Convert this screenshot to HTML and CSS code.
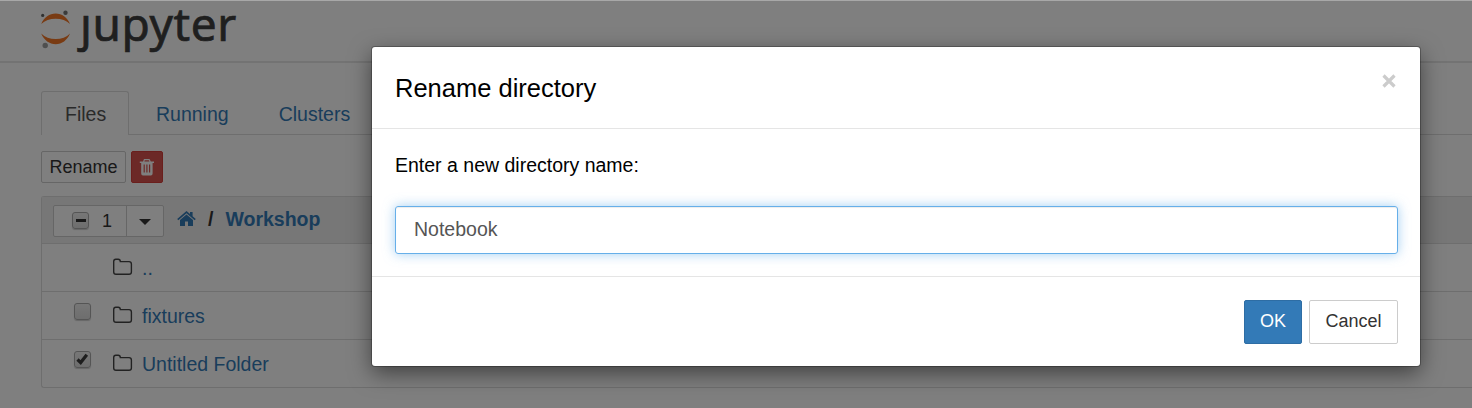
FILE: index.html
```html
<!DOCTYPE html>
<html lang="en">
<head>
<meta charset="utf-8">
<title>Workshop</title>
<link rel="stylesheet" href="styles.css">
</head>
<body>
<svg class="defs" width="0" height="0" aria-hidden="true">
  <symbol id="folder" viewBox="0 0 21 18"><path d="M1.700 3.400Q1.700 1.200 3.800 1.200H6.200Q8.300 1.200 8.300 3.600H17Q19.400 3.600 19.400 6V14Q19.400 16.200 17 16.200H4Q1.700 16.200 1.700 14Z" fill="none" stroke="#444" stroke-width="1.400"/></symbol>
</svg>
<header class="site-header">
  <svg class="logo-mark" width="30" height="40" viewBox="0 0 30 40">
    <path d="M.2 14C3 7.200 8.500 3.500 14.700 3.500S26.200 7.200 29 14C25.500 10.400 20.500 8.700 14.700 8.700S4 10.400.2 14Z" fill="#f37726"/>
    <path d="M.2 23.500C3 30.300 8.500 34.200 14.700 34.200S26.200 30.300 29 23.500C25.500 27.300 20.500 29 14.700 29S4 27.300.2 23.500Z" fill="#f37726"/>
    <circle cx="24.500" cy="2.700" r="2.200" fill="#767677"/><circle cx="1.700" cy="5.400" r="1.600" fill="#616262"/><circle cx="4.200" cy="35.500" r="2.700" fill="#9e9e9e"/>
  </svg>
  <span class="wordmark">ȷupyter</span>
</header>
<main class="page">
  <nav class="tabs"><a class="tab active">Files</a><a class="tab running">Running</a><a class="tab">Clusters</a></nav>
  <div class="actions">
    <span class="btn rename">Rename</span>
    <span class="btn danger"><svg width="16" height="17" viewBox="0 0 16 17"><path fill="#fff" fill-rule="evenodd" d="M5 0h5.500l1.300 2.600H15V4H13.600V14.500Q13.600 16.500 11.800 16.500H4Q2.200 16.500 2.200 14.500V4H.8V2.600H4ZM5.800 1.300 5.400 2.600h5L9.900 1.300ZM4.600 5.500v8h1.200v-8ZM7.300 5.500v8h1.200v-8ZM10 5.500v8h1.200v-8Z"/></svg></span>
  </div>
  <section class="list">
    <div class="list-head">
      <div class="select-group">
        <span class="select-all"><i class="check mixed"></i><span>1</span></span><span class="caret-btn"><i class="caret"></i></span>
      </div>
      <div class="crumbs">
        <svg width="19" height="16" viewBox="0 0 19 16"><path fill="#337ab7" d="M9.500 3.500 16 9V15H11V10.500H8V15H3V9ZM9.500 0 13 3V1h2.600v4.200L18.800 8 17.700 9.200 9.500 2.200 1.300 9.200.2 8Z"/></svg>
        <span class="slash">/</span><b class="link">Workshop</b>
      </div>
    </div>
    <div class="row"><span class="cell"></span><svg class="folder" width="21" height="18"><use href="#folder"/></svg><a class="link">..</a></div>
    <div class="row"><span class="cell"><i class="check"></i></span><svg class="folder" width="21" height="18"><use href="#folder"/></svg><a class="link">fixtures</a></div>
    <div class="row"><span class="cell"><i class="check"><svg width="13" height="12" viewBox="0 0 13 12"><path d="M1.500 6.500 4.700 9.600 10.800 1.800" fill="none" stroke="#3c3c3c" stroke-width="3.200"/></svg></i></span><svg class="folder" width="21" height="18"><use href="#folder"/></svg><a class="link">Untitled Folder</a></div>
  </section>
</main>
<div class="backdrop">
  <div class="modal">
    <div class="modal-head"><h4>Rename directory</h4><svg class="close" width="14" height="14" viewBox="0 0 14 14"><path d="M1.500 1.500 12.500 12.500M12.500 1.500 1.500 12.500" stroke="#ccc" stroke-width="3.200"/></svg></div>
    <div class="modal-body"><p>Enter a new directory name:</p><div class="input">Notebook</div></div>
    <div class="modal-foot"><span class="mbtn primary">OK</span><span class="mbtn">Cancel</span></div>
  </div>
</div>
</body>
</html>
```
FILE: styles.css
```css
* { box-sizing: border-box; }
body { margin: 0; height: 408px; overflow: hidden; background: #fff; color: #000; font: 19.5px/28px "Liberation Sans", Arial, sans-serif; }
.defs { position: absolute; }
.site-header { height: 63px; border-bottom: 2px solid #e7e7e7; padding: 10px 0 0 41px; display: flex; align-items: flex-start; }
.logo-mark { flex: none; }
.wordmark { font: 46px/50px "Noto Sans", "Open Sans", sans-serif; color: #3e3e3e; margin: -12px 0 0 9px; letter-spacing: .6px; -webkit-text-stroke: .7px #3e3e3e; }
.page { padding: 28px 0 0 41px; }
.tabs { height: 44px; display: flex; border-bottom: 1px solid #ddd; }
.tab { height: 43px; padding: 9px 23px 0 24px; color: #337ab7; }
.tab.active { width: 88px; height: 44px; padding: 8px 0 0 23px; color: #555; background: #fff; border: 1px solid #ddd; border-bottom: 0; border-radius: 3px 3px 0 0; }
.tab.running { padding: 9px 26px 0 27px; }
.actions { display: flex; gap: 5px; padding-top: 16px; height: 61px; }
.btn { height: 32px; border: 1px solid #ccc; border-radius: 2px; display: flex; align-items: center; justify-content: center; font-size: 18px; color: #333; }
.rename { width: 85px; }
.danger { width: 32px; background: #d9534f; border-color: #d43f3a; }
.list { height: 192px; border: 1px solid #ddd; border-right: 0; border-radius: 3px 0 0 3px; }
.list-head { height: 46px; background: #eee; padding: 8px 0 0 11px; display: flex; }
.select-group { display: flex; width: 111px; height: 32px; border: 1px solid #ccc; border-radius: 2px; background: #fff; font-size: 18px; color: #333; }
.select-all { width: 72px; padding-left: 18px; display: flex; align-items: center; gap: 13px; }
.select-all .check { margin-top: -2px; }
.caret-btn { flex: 1; border-left: 1px solid #ccc; display: flex; align-items: center; justify-content: center; }
.caret { border: 6px solid transparent; border-top-color: #333; border-bottom: 0; margin: 2px 1px 0 0; }
.crumbs { display: flex; padding-left: 13px; height: 28px; align-items: center; color: #333; }
.slash { margin: 0 12px; font-weight: bold; }
.link { color: #337ab7; }
.check { width: 17px; height: 17px; flex: none; border: 1.5px solid #aaa; border-radius: 3px; background: linear-gradient(#eee, #dcdcdc); box-shadow: 0 1px 1px #0003; display: flex; align-items: center; justify-content: center; }
.mixed::before { content: ""; width: 10px; height: 3px; background: #333; }
.row { height: 48px; border-top: 1px solid #ddd; display: flex; align-items: center; }
.cell { width: 70px; height: 26px; padding-left: 32px; }
.folder { margin: -2px 9px 0 0; }
.backdrop { position: absolute; inset: 0; background: rgba(0, 0, 0, .5); border-top: 1px solid #a8a8a8; padding: 46px 52px 0 372px; }
.modal { height: 319px; background: #fff; border-radius: 3px; box-shadow: 0 0 0 1px rgba(0, 0, 0, .25), 0 7px 22px rgba(0, 0, 0, .5); }
.modal-head { height: 82px; border-bottom: 1px solid #e5e5e5; padding: 24px 24px 0 23px; display: flex; justify-content: space-between; }
.modal-head h4 { margin: 0; font-size: 25.5px; line-height: 34px; font-weight: 400; }
.close { margin-top: 3px; }
.modal-body { height: 147px; padding: 22px 22px 0 23px; }
.modal-body p { margin: 0 0 27px; }
.input { height: 48px; border: 1px solid #66afe9; border-radius: 3px; padding: 8px 18px; color: #555; box-shadow: inset 0 1px 1px rgba(0, 0, 0, .075), 0 0 12px rgba(102, 175, 233, .6); }
.modal-foot { border-top: 1px solid #e5e5e5; height: 90px; padding: 23px 22px 0; display: flex; justify-content: flex-end; gap: 7px; }
.mbtn { width: 89px; height: 44px; border: 1px solid #ccc; border-radius: 2px; color: #333; font-size: 18px; line-height: 41px; text-align: center; }
.primary { width: 58px; color: #fff; background: #337ab7; border-color: #2e6da4; }
```
